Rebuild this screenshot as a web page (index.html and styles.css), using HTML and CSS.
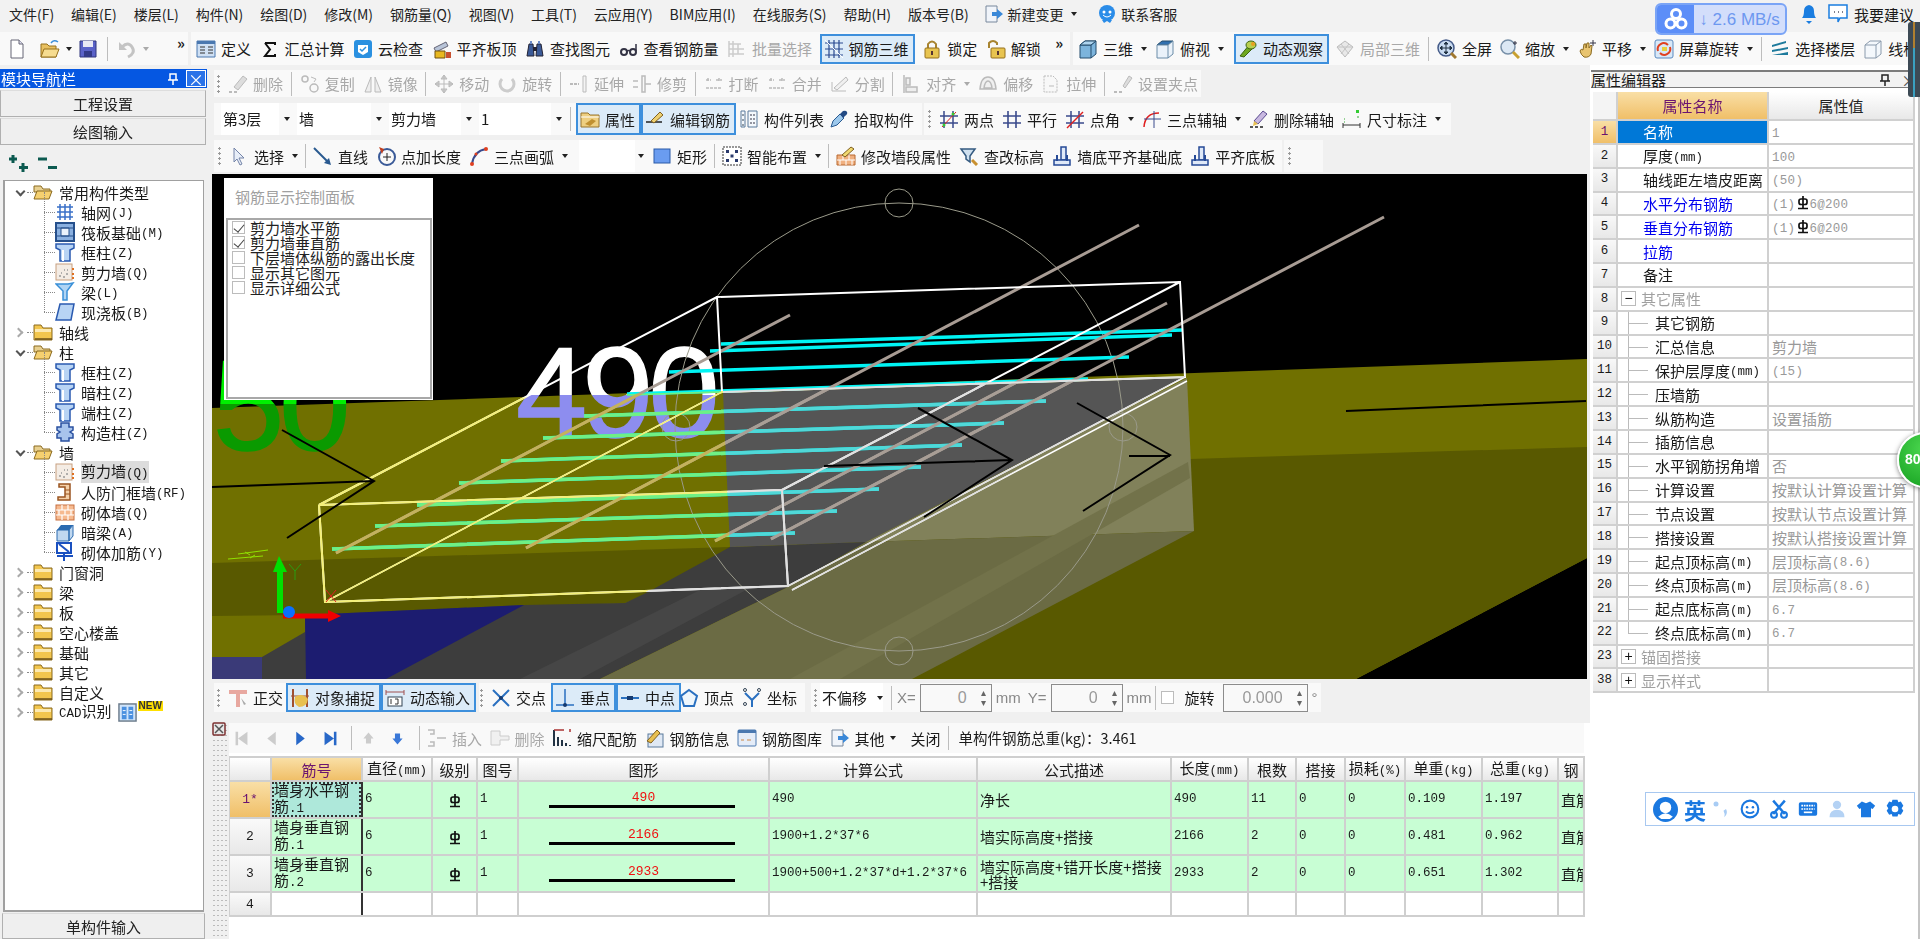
FILE: index.html
```html
<!DOCTYPE html>
<html lang="zh-CN">
<head>
<meta charset="utf-8">
<title>钢筋三维</title>
<link rel="stylesheet" href="styles.css">
</head>
<body>
<svg class="defs" width="0" height="0">
<defs>
<symbol id="doc" viewBox="0 0 20 20"><path d="M4 1h8l4 4v14H4z" fill="#fff" stroke="#667"/><path d="M12 1v4h4" fill="#dde" stroke="#667"/></symbol>
<symbol id="open" viewBox="0 0 20 20"><path d="M1 5h6l2 2h7v11H1z" fill="#e8c060" stroke="#96701c"/><path d="M1 18l3-8h15l-3 8z" fill="#f6dc90" stroke="#96701c"/><path d="M11 4q3-4 7-1" fill="none" stroke="#3c8ed8" stroke-width="1.5"/></symbol>
<symbol id="save" viewBox="0 0 20 20"><path d="M2 2h16v16H2z" fill="#5a62c8" stroke="#30367c"/><path d="M5 2h10v6H5z" fill="#e8e8f4"/><path d="M6 12h8v6H6z" fill="#333a88"/></symbol>
<symbol id="undo" viewBox="0 0 20 20"><path d="M5 8q6-6 10 0t-4 10" fill="none" stroke="#c4c4c4" stroke-width="3"/><path d="M2 3v8h8z" fill="#c4c4c4"/></symbol>
<symbol id="def" viewBox="0 0 20 20"><path d="M1 2h18v16H1z" fill="#cfe0f4" stroke="#4a78b0"/><path d="M1 2h18v3H1z" fill="#4a78b0"/><path d="M4 8h5M4 11h5M4 14h5M12 8h5M12 11h5M12 14h5" stroke="#333"/></symbol>
<symbol id="sigma" viewBox="0 0 20 20"><path d="M5 4h10v2M15 15v2H5l5-6.500L5 4" fill="none" stroke="#111" stroke-width="2"/></symbol>
<symbol id="cloud" viewBox="0 0 20 20"><rect x="1" y="1" width="18" height="18" rx="3" fill="#2a90e0"/><path d="M5 6h10v7l-5 3-5-3z" fill="#fff"/><path d="M7 10l2 2 4-4" fill="none" stroke="#2a90e0" stroke-width="1.500"/></symbol>
<symbol id="align" viewBox="0 0 20 20"><path d="M2 9l12-6 2 4-12 6z" fill="#b8c4d8" stroke="#667"/><path d="M3 12h10v7H3z" fill="#e8b820" stroke="#705010"/><path d="M14 13h5v6h-5z" fill="#c85030"/></symbol>
<symbol id="binoc" viewBox="0 0 20 20"><path d="M2 17l2-12h4l1 12zM11 17l1-12h4l2 12z" fill="#3a5a98" stroke="#223"/><path d="M8 8h4v4H8z" fill="#223"/><path d="M5 2h2v3H5zM13 2h2v3h-2z" fill="#6a8ac8"/></symbol>
<symbol id="glasses" viewBox="0 0 20 20"><circle cx="5" cy="13" r="3" fill="none" stroke="#334" stroke-width="2"/><circle cx="14" cy="13" r="3" fill="none" stroke="#334" stroke-width="2"/><path d="M8 12q2-1 3 0M17 12V5" fill="none" stroke="#334" stroke-width="1.500"/></symbol>
<symbol id="batch" viewBox="0 0 20 20"><path d="M2 2v16M6 2v16M2 5h12M2 10h15M2 15h15M11 5v10" fill="none" stroke="#ccc" stroke-width="1.500"/></symbol>
<symbol id="r3d" viewBox="0 0 20 20"><path d="M1 4h18M1 10h18M1 16h18M5 1v18M10 1v18M15 1v18" fill="none" stroke="#2a4a90" stroke-width="1.200"/><path d="M1 1l18 18" stroke="#fff"/></symbol>
<symbol id="lock" viewBox="0 0 20 20"><path d="M6 9V5q4-5 8 0v4" fill="none" stroke="#a88430" stroke-width="2"/><rect x="3" y="9" width="14" height="10" rx="1" fill="#e8c450" stroke="#96701c"/><path d="M10 12v4" stroke="#533" stroke-width="2"/></symbol>
<symbol id="unlock" viewBox="0 0 20 20"><path d="M3 9V4q4-4 8 0v2" fill="none" stroke="#a88430" stroke-width="2"/><rect x="5" y="9" width="14" height="10" rx="1" fill="#e8c450" stroke="#96701c"/><path d="M12 12v4" stroke="#533" stroke-width="2"/></symbol>
<symbol id="cube" viewBox="0 0 20 20"><path d="M2 6l5-4h11v13l-5 4H2z" fill="#7cb4dc" stroke="#244c6c"/><path d="M2 6h11v13M13 6l5-4" fill="none" stroke="#244c6c"/><path d="M2 6l5-4h11l-5 4z" fill="#aed4ee" stroke="#244c6c"/></symbol>
<symbol id="topv" viewBox="0 0 20 20"><path d="M2 6l5-4h11l-5 4z" fill="#3070b0" stroke="#244c6c"/><path d="M2 6h11v13H2zM13 6l5-4v13l-5 4" fill="#eaf2fa" stroke="#6a8ca8"/></symbol>
<symbol id="orbit" viewBox="0 0 20 20"><path d="M2 17L12 5l4 3-10 10z" fill="#6ea820" stroke="#3c6410"/><ellipse cx="13" cy="6" rx="5" ry="4" fill="#b8d050" stroke="#3c6410"/><circle cx="15" cy="5" r="2" fill="#e8a020"/></symbol>
<symbol id="loc3" viewBox="0 0 20 20"><path d="M2 8l8-6 8 6-8 10z" fill="#e8e8e8" stroke="#bbb"/><path d="M6 5l8 10M14 5L6 15M2 8h16" stroke="#c4c4c4"/></symbol>
<symbol id="zall" viewBox="0 0 20 20"><circle cx="9" cy="9" r="8" fill="#c8daf0" stroke="#445a88" stroke-width="1.500"/><path d="M9 3v12M3 9h12M9 3L7 5h4zM9 15l-2-2h4zM3 9l2-2v4zM15 9l-2-2v4z" stroke="#234" fill="#234"/><path d="M14 14l5 5" stroke="#a07830" stroke-width="3"/></symbol>
<symbol id="zoom" viewBox="0 0 20 20"><circle cx="8" cy="8" r="7" fill="#dce8f4" stroke="#7890a8" stroke-width="1.500"/><path d="M13 13l6 6" stroke="#c8a030" stroke-width="3"/><path d="M15 2v4M13 4h4" stroke="#334"/></symbol>
<symbol id="pan" viewBox="0 0 20 20"><path d="M3 12q1-3 3-1l1-6h2v4l1-5h2v5l2-3 1 1-1 8q-2 4-7 3-3-2-4-6z" fill="#e8c470" stroke="#8a6a20"/><path d="M16 1v6M13 4h6" stroke="#334"/></symbol>
<symbol id="scrot" viewBox="0 0 20 20"><rect x="1" y="1" width="18" height="18" rx="2" fill="#d8e8f8" stroke="#5a8ac0"/><path d="M4 12a6 6 0 0 1 10-6M16 8a6 6 0 0 1-10 6" fill="none" stroke="#e04020" stroke-width="2"/><path d="M8 8h5v4H8z" fill="#e8d040"/></symbol>
<symbol id="floors" viewBox="0 0 20 20"><path d="M2 6l14-4v2L2 8zM2 11l16-3v2L2 13zM2 16l16-3v3H2z" fill="#1d7a9c"/></symbol>
<symbol id="wire" viewBox="0 0 20 20"><path d="M2 6l5-4h11v13l-5 4H2zM2 6h11v13M13 6l5-4" fill="#f4f8fc" stroke="#8a9aac"/></symbol>
<symbol id="del" viewBox="0 0 20 20"><path d="M6 13L15 2l4 3-9 11z" fill="#ddd" stroke="#bbb"/><path d="M1 18h3M6 18h3" stroke="#bbb" stroke-width="2"/></symbol>
<symbol id="copy" viewBox="0 0 20 20"><circle cx="5" cy="5" r="3" fill="none" stroke="#bbb" stroke-width="1.500"/><circle cx="14" cy="14" r="4" fill="none" stroke="#bbb" stroke-width="1.500"/><path d="M11 3l5 2-2 3" fill="none" stroke="#bbb"/></symbol>
<symbol id="mirror" viewBox="0 0 20 20"><path d="M8 3v15H2zM12 3v15h6z" fill="#eee" stroke="#bbb"/></symbol>
<symbol id="move" viewBox="0 0 20 20"><path d="M10 1v18M1 10h18M10 1L7 5h6zM10 19l-3-4h6zM1 10l4-3v6zM19 10l-4-3v6z" stroke="#bbb" fill="#ccc"/></symbol>
<symbol id="rot" viewBox="0 0 20 20"><path d="M5 5a7 7 0 1 0 10 0" fill="none" stroke="#ccc" stroke-width="3"/></symbol>
<symbol id="ext" viewBox="0 0 20 20"><path d="M1 10h9" stroke="#bbb" stroke-dasharray="3 1" stroke-width="2"/><path d="M14 2h3v16h-3z" fill="#f4f4f4" stroke="#bbb"/></symbol>
<symbol id="trim" viewBox="0 0 20 20"><path d="M1 7h5M1 13h5M10 2h3v16h-3zM13 10h6" fill="none" stroke="#bbb" stroke-width="1.500"/></symbol>
<symbol id="brk" viewBox="0 0 20 20"><path d="M2 6h5M12 6h6M2 14h16M4 4v4M15 4v4" stroke="#bbb" stroke-width="1.500" stroke-dasharray="3 1"/></symbol>
<symbol id="split" viewBox="0 0 20 20"><path d="M2 17h14M2 17V8M4 14L16 3l2 3-11 10z" fill="#f0f0f0" stroke="#bbb"/></symbol>
<symbol id="alr" viewBox="0 0 20 20"><path d="M3 1v18M5 4h4v7H5zM5 13h11v5H5z" fill="#eee" stroke="#bbb" stroke-width="1.500"/></symbol>
<symbol id="off" viewBox="0 0 20 20"><path d="M2 15q1-12 8-12t8 12zM6 14q1-7 4-7t4 7z" fill="#f0f0f0" stroke="#bbb" stroke-width="1.500"/></symbol>
<symbol id="stretch" viewBox="0 0 20 20"><path d="M3 2h9l4 4v12H3z" fill="#f8f8f8" stroke="#bbb" stroke-dasharray="2 1"/><path d="M8 12h5" stroke="#bbb"/></symbol>
<symbol id="grip" viewBox="0 0 20 20"><path d="M10 12l6-10 3 2-7 10z" fill="#ddd" stroke="#bbb"/><path d="M1 18h3M6 18h3" stroke="#bbb" stroke-width="2"/></symbol>
<symbol id="attr" viewBox="0 0 20 20"><path d="M1 4h7l2 2h9v12H1z" fill="#eecf80" stroke="#98742c"/><path d="M5 15l7-5 4 2-6 5z" fill="#c09030"/><path d="M1 8h18" stroke="#fff"/></symbol>
<symbol id="edbar" viewBox="0 0 20 20"><path d="M1 13h16" stroke="#222" stroke-width="1.500"/><path d="M6 12L15 3l3 3-9 8z" fill="#eed070" stroke="#806020"/></symbol>
<symbol id="list" viewBox="0 0 20 20"><path d="M2 2h4v16H2zM9 2h9v16H9z" fill="#f4f8fc" stroke="#5a7a9c"/><path d="M11 6h5M11 10h5M11 14h5" stroke="#334" stroke-dasharray="2 1"/><path d="M4 5v2M4 10v2M4 15v2" stroke="#345"/></symbol>
<symbol id="pick" viewBox="0 0 20 20"><path d="M2 18l2-6 7-7 4 4-7 7z" fill="#9cc8ec" stroke="#2a5a90"/><path d="M11 5l3-3q3-1 4 1t-2 4l-2 2z" fill="#224a84"/></symbol>
<symbol id="twop" viewBox="0 0 20 20"><path d="M5 2v17M14 2v17M1 7h18M1 14h18" stroke="#3a4a8c" stroke-width="1.500"/><path d="M3 18L17 3" stroke="#e02020"/><circle cx="14" cy="5" r="1.500" fill="#3c3"/><circle cx="5" cy="16" r="1.500" fill="#3c3"/></symbol>
<symbol id="par" viewBox="0 0 20 20"><path d="M6 2v17M14 2v17M1 7h18M1 14h18" stroke="#3a4a8c" stroke-width="1.600"/></symbol>
<symbol id="ang" viewBox="0 0 20 20"><path d="M6 2v17M14 2v17M1 7h18M1 14h18" stroke="#3a4a8c" stroke-width="1.500"/><path d="M2 19L18 3" stroke="#e02020" stroke-width="1.500"/></symbol>
<symbol id="arc3" viewBox="0 0 20 20"><path d="M2 18q1-14 15-14" fill="none" stroke="#e02020" stroke-width="1.500"/><path d="M12 2v17M2 10h17" stroke="#3a4a8c"/></symbol>
<symbol id="delax" viewBox="0 0 20 20"><path d="M5 12l9-10 4 3-9 10z" fill="#c8b8e0" stroke="#5a4a90"/><path d="M5 12l4 3-5 2z" fill="#e8c050"/><path d="M1 18h3M6 18h3M11 18h3" stroke="#555" stroke-width="2"/></symbol>
<symbol id="dim" viewBox="0 0 20 20"><rect x="14" y="1" width="3" height="3" fill="#3c3"/><path d="M2 10h1M2 13h1M16 7v2" stroke="#3a3"/><path d="M1 14v5M18 14v5M1 16h17" stroke="#333"/></symbol>
<symbol id="cursor" viewBox="0 0 20 20"><path d="M5 2v14l3-3 3 6 2-1-3-6h5z" fill="#e8eef8" stroke="#7484a8"/></symbol>
<symbol id="line" viewBox="0 0 20 20"><path d="M1 2l15 15" stroke="#2a5a90" stroke-width="2"/><path d="M18 19l-7-2 5-5z" fill="#2a5a90"/></symbol>
<symbol id="ptlen" viewBox="0 0 20 20"><circle cx="11" cy="11" r="8" fill="none" stroke="#3a5a98" stroke-width="2"/><path d="M11 7v8M7 11h8" stroke="#222"/><path d="M3 1l5 2-2 5z" fill="#c04020"/></symbol>
<symbol id="arc" viewBox="0 0 20 20"><path d="M3 18Q5 5 17 3" fill="none" stroke="#3a4a8c" stroke-width="2"/><circle cx="3" cy="18" r="2" fill="#e04020"/><circle cx="7" cy="8" r="1.500" fill="#e04020"/><circle cx="17" cy="3" r="2" fill="#e04020"/></symbol>
<symbol id="rect" viewBox="0 0 20 20"><rect x="2" y="3" width="16" height="14" fill="#6a9cf0" stroke="#2a5aa8"/></symbol>
<symbol id="smart" viewBox="0 0 20 20"><rect x="1" y="1" width="18" height="18" fill="#fff" stroke="#333" stroke-dasharray="2 1"/><path d="M4 4h3v3H4zM13 4h3v3h-3zM8.500 8.500h3v3h-3zM4 13h3v3H4zM13 13h3v3h-3z" fill="#2a3a6c"/></symbol>
<symbol id="wprop" viewBox="0 0 20 20"><path d="M1 9h18v10H1z" fill="#f0b080" stroke="#b86830"/><path d="M1 14h18M7 9v5M13 9v5M4 14v5M10 14v5M16 14v5" stroke="#fff"/><path d="M6 9l9-8 3 2-9 8z" fill="#f0d870" stroke="#806020"/></symbol>
<symbol id="elev" viewBox="0 0 20 20"><path d="M2 3h14l-5 7v6l-4-3v-3z" fill="#cfe0ef" stroke="#345a80" stroke-width="1.500"/><path d="M13 14l5 5" stroke="#c89030" stroke-width="3"/></symbol>
<symbol id="base" viewBox="0 0 20 20"><path d="M9 1h5v13H9z" fill="#dfe9f8" stroke="#264a96" stroke-width="1.500"/><path d="M2 14h16v5H2z" fill="#dfe9f8" stroke="#264a96" stroke-width="1.500"/><path d="M5 9v6M15 9v6" stroke="#264a96" stroke-width="2"/></symbol>
<symbol id="ortho" viewBox="0 0 20 20"><path d="M1 2h18v4H12v13H8V6H1z" fill="#e8a8a0"/><path d="M13 10l5 6-2 1z" fill="#aaa"/></symbol>
<symbol id="snap" viewBox="0 0 20 20"><path d="M3 1v18M17 1v18" stroke="#a05030" stroke-width="2"/><path d="M1 8h18" stroke="#a05030"/><path d="M5 9q7-5 13 2-1 8-9 8-6-3-4-10z" fill="#e8c050"/></symbol>
<symbol id="dyn" viewBox="0 0 20 20"><path d="M1 2v5M19 2v5M1 4h18" stroke="#a05050"/><rect x="3" y="9" width="14" height="9" fill="#fff" stroke="#345"/><path d="M6 11v5M10 11h3v5h-3" fill="none" stroke="#333"/></symbol>
<symbol id="cross" viewBox="0 0 20 20"><path d="M2 2l16 16M18 2L2 18" stroke="#2a70c0" stroke-width="2"/><circle cx="10" cy="10" r="2" fill="#163a70"/></symbol>
<symbol id="perp" viewBox="0 0 20 20"><path d="M10 1v17M1 17h18" stroke="#2a70c0" stroke-width="1.500"/><circle cx="10" cy="17" r="2" fill="#163a70"/></symbol>
<symbol id="midp" viewBox="0 0 20 20"><path d="M1 10h18" stroke="#2a70c0" stroke-width="2"/><rect x="7" y="8" width="6" height="4" fill="#163a70"/></symbol>
<symbol id="vert" viewBox="0 0 20 20"><path d="M10 2l8 6-3 10H5L2 8z" fill="#eef6fc" stroke="#2a70c0" stroke-width="2"/></symbol>
<symbol id="coord" viewBox="0 0 20 20"><path d="M3 5l7 7 7-7M10 12v7" fill="none" stroke="#2a70c0" stroke-width="2"/><circle cx="3" cy="2" r="1.500" fill="none" stroke="#345"/><circle cx="17" cy="2" r="1.500" fill="none" stroke="#345"/><circle cx="3" cy="16" r="1.500" fill="none" stroke="#345"/></symbol>
<symbol id="first" viewBox="0 0 20 20"><path d="M3 2h3v16H3zM17 2v16L6 10z" fill="#ccc"/></symbol>
<symbol id="prev" viewBox="0 0 20 20"><path d="M15 2v16L5 10z" fill="#ccc"/></symbol>
<symbol id="next" viewBox="0 0 20 20"><path d="M5 2v16l10-8z" fill="#2868c8"/></symbol>
<symbol id="last" viewBox="0 0 20 20"><path d="M14 2h3v16h-3zM3 2v16l11-8z" fill="#2868c8"/></symbol>
<symbol id="up" viewBox="0 0 20 20"><path d="M10 3l6 7h-3v6H7v-6H4z" fill="#ccc"/></symbol>
<symbol id="down" viewBox="0 0 20 20"><path d="M10 17l6-7h-3V4H7v6H4z" fill="#3a78d8"/></symbol>
<symbol id="ins" viewBox="0 0 20 20"><path d="M1 2h6v4H3M1 18h6v-4H3M10 10h9" fill="none" stroke="#bbb" stroke-width="1.500"/></symbol>
<symbol id="delr" viewBox="0 0 20 20"><path d="M1 3h9v5h9v4h-9v5H1z" fill="#f0f0f0" stroke="#ccc"/></symbol>
<symbol id="scale" viewBox="0 0 20 20"><path d="M2 18V2M6 18V9M10 18v-6M14 18v-3M18 18v-1" stroke="#234" stroke-width="2"/><path d="M2 2h10M18 1v3" stroke="#a33" stroke-width="1.500"/></symbol>
<symbol id="info" viewBox="0 0 20 20"><rect x="3" y="6" width="15" height="13" fill="#dfe8f4" stroke="#5a7a9c"/><path d="M2 13L12 2l3 3-9 10z" fill="#e8c050" stroke="#806020"/></symbol>
<symbol id="lib" viewBox="0 0 20 20"><rect x="1" y="2" width="18" height="16" rx="1" fill="#e4ecf8" stroke="#4a78b0"/><path d="M1 2h18v3H1z" fill="#4a78b0"/><path d="M4 12h3M10 12h4" stroke="#c84"/></symbol>
<symbol id="other" viewBox="0 0 20 20"><path d="M2 2h11v16H2z" fill="#f0f4fa" stroke="#78889c"/><path d="M8 8h5V5l6 5-6 5v-3H8z" fill="#3a88d8"/></symbol>
<symbol id="fold" viewBox="0 0 20 20"><path d="M1 3h7l2 3h9v12H1z" fill="#f2c64e" stroke="#8a6a20"/><path d="M2 7h16v3H2z" fill="#fbe9b2"/><path d="M2 17h17" stroke="#6a5018" stroke-width="1.500"/></symbol>
<symbol id="foldo" viewBox="0 0 20 20"><path d="M1 4h7l2 3h7v3H1z" fill="#e8d090" stroke="#8a6a20"/><path d="M1 17l3-8h15l-3 8z" fill="#f5d070" stroke="#8a6a20"/></symbol>
<symbol id="grid" viewBox="0 0 20 20"><path d="M2 5h16M2 10h16M2 15h16M5 2v16M10 2v16M15 2v16" stroke="#3a70c8" stroke-width="1.500"/></symbol>
<symbol id="raft" viewBox="0 0 20 20"><rect x="1" y="1" width="18" height="18" fill="#8ab0e0" stroke="#26508c" stroke-width="2"/><path d="M6 6h8v8H6z" fill="#eaf2fc" stroke="#26508c"/><path d="M1 6h18M1 14h18" stroke="#26508c"/></symbol>
<symbol id="col" viewBox="0 0 20 20"><path d="M1 2h18v4l-4 2v11H5V8L1 6z" fill="#b8d4f4" stroke="#2a5ab0" stroke-width="1.500"/><path d="M8 8v11" stroke="#fff" stroke-width="2"/></symbol>
<symbol id="wall" viewBox="0 0 20 20"><rect x="1" y="2" width="16" height="16" fill="#f4ece4" stroke="#c8a080"/><path d="M4 14h2M8 15h2M11 12h2M6 11h1M12 8h1M9 8h1" stroke="#999" stroke-width="1.500"/><path d="M18 6v2M18 11v2M18 15v2" stroke="#e07020" stroke-width="2"/></symbol>
<symbol id="beam" viewBox="0 0 20 20"><path d="M1 2h12l5-1-6 8v9H8V9z" fill="#b0d4f4" stroke="#3a90d8" stroke-width="1.500"/></symbol>
<symbol id="slab" viewBox="0 0 20 20"><path d="M5 2h14l-3 16H1z" fill="#b8d4f4" stroke="#2a5ab0" stroke-width="1.500"/></symbol>
<symbol id="gzz" viewBox="0 0 20 20"><path d="M6 1h8v4h4v3l-3 2 3 2v4h-4v3H6v-3H2v-4l3-2-3-2V5h4z" fill="#a8c4ec" stroke="#2a50a0" stroke-width="1.500"/></symbol>
<symbol id="rf" viewBox="0 0 20 20"><path d="M4 2h11v16H3v-3h7V5H4z" fill="#f4d0a8" stroke="#9a5420" stroke-width="1.500"/><path d="M10 8h5M10 12h5" stroke="#9a5420"/></symbol>
<symbol id="brick" viewBox="0 0 20 20"><rect x="1" y="3" width="18" height="15" fill="#f6ba90" stroke="#c87040"/><path d="M1 8h18M1 13h18M7 3v5M13 3v5M4 8v5M10 8v5M16 8v5M7 13v5M13 13v5" stroke="#fff" stroke-width="1.200"/></symbol>
<symbol id="lint" viewBox="0 0 20 20"><path d="M2 8l4-5h12l-4 5z" fill="#2a6ab0"/><path d="M2 8h12v11H2zM14 8l4-5v11l-4 5z" fill="#c0d8f0" stroke="#2a6ab0"/></symbol>
<symbol id="mas" viewBox="0 0 20 20"><rect x="2" y="1" width="14" height="10" fill="#fff" stroke="#1a50c0" stroke-width="2"/><path d="M4 2l10 8M2 14h16M9 11v8" stroke="#1a50c0" stroke-width="2"/></symbol>
<symbol id="cad" viewBox="0 0 20 20"><rect x="1" y="1" width="18" height="18" fill="#d0e4fa" stroke="#6a7a8a" stroke-width="1.500"/><path d="M4 4h5v13H4zM11 4h5v13h-5z" fill="#4a90e0"/><path d="M5 8h3M5 12h3M12 8h3M12 12h3" stroke="#fff"/></symbol>
<symbol id="grade" viewBox="0 0 12 14"><path d="M6 0v12M1 12.500h10" stroke="#111" stroke-width="1.700"/><rect x="2" y="3" width="8" height="5.500" rx="2" fill="none" stroke="#111" stroke-width="1.700"/></symbol>
<symbol id="pin" viewBox="0 0 12 12"><path d="M3 1h6v6H3zM1 7h10M6 7v5" fill="none" stroke="currentColor" stroke-width="1.500"/></symbol>
</defs>
</svg>

<div class="app">
  <header class="menubar">
    <span>文件(F)</span><span>编辑(E)</span><span>楼层(L)</span><span>构件(N)</span><span>绘图(D)</span><span>修改(M)</span><span>钢筋量(Q)</span><span>视图(V)</span><span>工具(T)</span><span>云应用(Y)</span><span>BIM应用(I)</span><span>在线服务(S)</span><span>帮助(H)</span><span>版本号(B)</span>
    <span class="it"><svg class="ic"><use href="#other"/></svg>新建变更</span><i class="car"></i>
    <span class="it"><svg class="ic" viewBox="0 0 20 20"><circle cx="10" cy="9" r="8" fill="#2a8ce8"/><path d="M5 16l2 3 3-2 3 2 2-3z" fill="#2a8ce8"/><circle cx="7" cy="8" r="1.500" fill="#fff"/><circle cx="13" cy="8" r="1.500" fill="#fff"/><path d="M6 11q4 4 8 0" fill="none" stroke="#fff"/></svg>联系客服</span>
  </header>

  <div class="tools-top">
    <div class="tb tb-file">
      <svg class="ic"><use href="#doc"/></svg><svg class="ic gap-s"><use href="#open"/></svg><i class="car"></i><svg class="ic"><use href="#save"/></svg><b class="sep"></b><svg class="ic"><use href="#undo"/></svg><i class="car dis"></i><span class="more">»</span>
    </div>
    <div class="tb tb-main">
      <span class="it"><svg class="ic"><use href="#def"/></svg>定义</span>
      <span class="it"><svg class="ic"><use href="#sigma"/></svg>汇总计算</span>
      <span class="it"><svg class="ic"><use href="#cloud"/></svg>云检查</span>
      <span class="it"><svg class="ic"><use href="#align"/></svg>平齐板顶</span>
      <span class="it"><svg class="ic"><use href="#binoc"/></svg>查找图元</span>
      <span class="it"><svg class="ic"><use href="#glasses"/></svg>查看钢筋量</span>
      <span class="it dis"><svg class="ic"><use href="#batch"/></svg>批量选择</span>
      <span class="it on"><svg class="ic"><use href="#r3d"/></svg>钢筋三维</span>
      <span class="it"><svg class="ic"><use href="#lock"/></svg>锁定</span>
      <span class="it"><svg class="ic"><use href="#unlock"/></svg>解锁</span>
      <span class="more">»</span>
    </div>
    <div class="tb tb-view">
      <span class="it"><svg class="ic"><use href="#cube"/></svg>三维</span><i class="car"></i>
      <span class="it"><svg class="ic"><use href="#topv"/></svg>俯视</span><i class="car"></i>
      <span class="it on"><svg class="ic"><use href="#orbit"/></svg>动态观察</span>
      <span class="it dis"><svg class="ic"><use href="#loc3"/></svg>局部三维</span><b class="sep"></b>
      <span class="it"><svg class="ic"><use href="#zall"/></svg>全屏</span>
      <span class="it"><svg class="ic"><use href="#zoom"/></svg>缩放</span><i class="car"></i>
      <span class="it"><svg class="ic"><use href="#pan"/></svg>平移</span><i class="car"></i>
      <span class="it"><svg class="ic"><use href="#scrot"/></svg>屏幕旋转</span><i class="car"></i><b class="sep"></b>
      <span class="it"><svg class="ic"><use href="#floors"/></svg>选择楼层</span>
      <span class="it"><svg class="ic"><use href="#wire"/></svg>线框</span>
    </div>
  </div>

  <div class="main">
    <aside class="nav">
      <div class="nav-title"><span>模块导航栏</span><svg class="pin"><use href="#pin"/></svg><span class="nav-x">×</span></div>
      <button class="nav-btn">工程设置</button>
      <button class="nav-btn">绘图输入</button>
      <div class="nav-pm">
        <svg class="pm-ic" viewBox="0 0 24 20"><path d="M5 1v8M1 5h8M15 9v9M11 13.500h9" stroke="#0c5a50" stroke-width="3"/></svg>
        <svg class="pm-ic" viewBox="0 0 24 20"><path d="M1 5h9M11 13.500h9" stroke="#0c5a50" stroke-width="3"/></svg>
      </div>
      <div class="tree">
        <div class="tr open"><i class="tw"></i><svg class="fo"><use href="#foldo"/></svg>常用构件类型</div>
        <div class="tr ch"><svg class="fo"><use href="#grid"/></svg>轴网<span class="lat">(J)</span></div>
        <div class="tr ch"><svg class="fo"><use href="#raft"/></svg>筏板基础<span class="lat">(M)</span></div>
        <div class="tr ch"><svg class="fo"><use href="#col"/></svg>框柱<span class="lat">(Z)</span></div>
        <div class="tr ch"><svg class="fo"><use href="#wall"/></svg>剪力墙<span class="lat">(Q)</span></div>
        <div class="tr ch"><svg class="fo"><use href="#beam"/></svg>梁<span class="lat">(L)</span></div>
        <div class="tr ch end"><svg class="fo"><use href="#slab"/></svg>现浇板<span class="lat">(B)</span></div>
        <div class="tr"><i class="tw cl"></i><svg class="fo"><use href="#fold"/></svg>轴线</div>
        <div class="tr open"><i class="tw"></i><svg class="fo"><use href="#foldo"/></svg>柱</div>
        <div class="tr ch"><svg class="fo"><use href="#col"/></svg>框柱<span class="lat">(Z)</span></div>
        <div class="tr ch"><svg class="fo"><use href="#col"/></svg>暗柱<span class="lat">(Z)</span></div>
        <div class="tr ch"><svg class="fo"><use href="#col"/></svg>端柱<span class="lat">(Z)</span></div>
        <div class="tr ch end"><svg class="fo"><use href="#gzz"/></svg>构造柱<span class="lat">(Z)</span></div>
        <div class="tr open"><i class="tw"></i><svg class="fo"><use href="#foldo"/></svg>墙</div>
        <div class="tr ch"><svg class="fo"><use href="#wall"/></svg><span class="sel">剪力墙<span class="lat">(Q)</span></span></div>
        <div class="tr ch"><svg class="fo"><use href="#rf"/></svg>人防门框墙<span class="lat">(RF)</span></div>
        <div class="tr ch"><svg class="fo"><use href="#brick"/></svg>砌体墙<span class="lat">(Q)</span></div>
        <div class="tr ch"><svg class="fo"><use href="#lint"/></svg>暗梁<span class="lat">(A)</span></div>
        <div class="tr ch end"><svg class="fo"><use href="#mas"/></svg>砌体加筋<span class="lat">(Y)</span></div>
        <div class="tr"><i class="tw cl"></i><svg class="fo"><use href="#fold"/></svg>门窗洞</div>
        <div class="tr"><i class="tw cl"></i><svg class="fo"><use href="#fold"/></svg>梁</div>
        <div class="tr"><i class="tw cl"></i><svg class="fo"><use href="#fold"/></svg>板</div>
        <div class="tr"><i class="tw cl"></i><svg class="fo"><use href="#fold"/></svg>空心楼盖</div>
        <div class="tr"><i class="tw cl"></i><svg class="fo"><use href="#fold"/></svg>基础</div>
        <div class="tr"><i class="tw cl"></i><svg class="fo"><use href="#fold"/></svg>其它</div>
        <div class="tr"><i class="tw cl"></i><svg class="fo"><use href="#fold"/></svg>自定义</div>
        <div class="tr"><i class="tw cl"></i><svg class="fo"><use href="#fold"/></svg><span class="lbl"><span class="lat">CAD</span>识别</span><svg class="fo cad"><use href="#cad"/></svg><span class="new">NEW</span></div>
      </div>
      <button class="nav-btn last">单构件输入</button>
    </aside>

    <section class="center">
      <div class="tb tb-edit dis-row">
        <i class="hd"></i>
        <span class="it"><svg class="ic"><use href="#del"/></svg>删除</span><b class="sep"></b>
        <span class="it"><svg class="ic"><use href="#copy"/></svg>复制</span>
        <span class="it"><svg class="ic"><use href="#mirror"/></svg>镜像</span><b class="sep"></b>
        <span class="it"><svg class="ic"><use href="#move"/></svg>移动</span>
        <span class="it"><svg class="ic"><use href="#rot"/></svg>旋转</span><b class="sep"></b>
        <span class="it"><svg class="ic"><use href="#ext"/></svg>延伸</span>
        <span class="it"><svg class="ic"><use href="#trim"/></svg>修剪</span><b class="sep"></b>
        <span class="it"><svg class="ic"><use href="#brk"/></svg>打断</span>
        <span class="it"><svg class="ic"><use href="#brk"/></svg>合并</span>
        <span class="it"><svg class="ic"><use href="#split"/></svg>分割</span><b class="sep"></b>
        <span class="it"><svg class="ic"><use href="#alr"/></svg>对齐</span><i class="car dis"></i>
        <span class="it"><svg class="ic"><use href="#off"/></svg>偏移</span>
        <span class="it"><svg class="ic"><use href="#stretch"/></svg>拉伸</span><b class="sep"></b>
        <span class="it"><svg class="ic"><use href="#grip"/></svg>设置夹点</span>
      </div>

      <div class="tb-row r3">
        <div class="tb tb-comp">
          <span class="cb c1">第3层</span><i class="car"></i>
          <span class="cb c2">墙</span><i class="car"></i>
          <span class="cb c3">剪力墙</span><i class="car"></i>
          <span class="cb c4">1</span><i class="car"></i><b class="sep"></b>
          <div class="pair">
            <span class="it on"><svg class="ic"><use href="#attr"/></svg>属性</span>
            <span class="it on"><svg class="ic"><use href="#edbar"/></svg>编辑钢筋</span>
          </div>
          <span class="it"><svg class="ic"><use href="#list"/></svg>构件列表</span>
          <span class="it"><svg class="ic"><use href="#pick"/></svg>拾取构件</span>
        </div>
        <div class="tb tb-axis">
          <i class="hd"></i>
          <span class="it"><svg class="ic"><use href="#twop"/></svg>两点</span>
          <span class="it"><svg class="ic"><use href="#par"/></svg>平行</span>
          <span class="it"><svg class="ic"><use href="#ang"/></svg>点角</span><i class="car"></i>
          <span class="it"><svg class="ic"><use href="#arc3"/></svg>三点辅轴</span><i class="car"></i>
          <span class="it"><svg class="ic"><use href="#delax"/></svg>删除辅轴</span>
          <span class="it"><svg class="ic"><use href="#dim"/></svg>尺寸标注</span><i class="car"></i>
        </div>
      </div>

      <div class="tb-row r4">
        <div class="tb tb-draw">
          <i class="hd"></i>
          <span class="it"><svg class="ic"><use href="#cursor"/></svg>选择</span><i class="car"></i><b class="sep"></b>
          <span class="it"><svg class="ic"><use href="#line"/></svg>直线</span>
          <span class="it"><svg class="ic"><use href="#ptlen"/></svg>点加长度</span>
          <span class="it"><svg class="ic"><use href="#arc"/></svg>三点画弧</span><i class="car"></i>
          <span class="cb c5"></span><i class="car"></i>
          <span class="it"><svg class="ic"><use href="#rect"/></svg>矩形</span><b class="sep"></b>
          <span class="it"><svg class="ic"><use href="#smart"/></svg>智能布置</span><i class="car"></i><b class="sep"></b>
          <span class="it"><svg class="ic"><use href="#wprop"/></svg>修改墙段属性</span>
          <span class="it"><svg class="ic"><use href="#elev"/></svg>查改标高</span>
          <span class="it"><svg class="ic"><use href="#base"/></svg>墙底平齐基础底</span>
          <span class="it"><svg class="ic"><use href="#base"/></svg>平齐底板</span>
        </div>
        <div class="tb tb-stub"><i class="hd"></i></div>
      </div>

      <div class="stage">
        <svg class="scene" viewBox="212 174 1375 505" width="1375" height="505">
          <defs>
            <linearGradient id="t490" gradientUnits="userSpaceOnUse" x1="0" y1="392" x2="0" y2="398"><stop offset="0" stop-color="#fff"/><stop offset="0.500" stop-color="#fff"/><stop offset="0.500" stop-color="#8d8def"/></linearGradient>
            <linearGradient id="t50" gradientUnits="userSpaceOnUse" x1="0" y1="400" x2="0" y2="408"><stop offset="0.500" stop-color="#00f000"/><stop offset="0.500" stop-color="#0a9a00"/></linearGradient>
            <clipPath id="zOlive"><polygon points="212,408 723,391 730,547 625,603 212,620"/></clipPath>
            <clipPath id="zGrey"><polygon points="723,391 1186,376 1000,480 788,600 625,603 730,547"/></clipPath>
            <g id="bars">
              <path d="M332 549L795 533M375 526L837 511M417 505L879 489M459 483L921 467M501 461L962 445M543 438L1004 423M584 416L1046 401M627 394L1088 379M669 372L1129 357M710 351L1172 335M721 344L1183 330"/>
            </g>
            <g id="rods">
              <path d="M336 553L790 315M526 548L1139 225M715 541L1167 303M771 539L1384 217"/>
            </g>
            <g id="box">
              <path d="M717 297L1180 282L1185 377L722 392ZM717 297L319 505L782 490L1180 282M319 505L325 602L788 586L782 490"/>
              <path class="thin" d="M722 392L325 602M1185 377L788 586M1187 381L792 590"/>
            </g>
          </defs>
          <rect x="212" y="174" width="1375" height="505" fill="#000"/>
          <polygon fill="#707000" points="212,408 1587,359 1587,558 1356,679 212,679"/>
          <polygon fill="#595900" points="1190,459 1587,447 1587,558 1356,679 700,679 800,540"/>
          <polygon fill="#595900" points="212,563 730,547 730,560 625,603 305,615 212,616"/>
          <polygon fill="#3a3a78" points="212,657 262,657 262,679 212,679"/>
          <polygon fill="#3d3d3d" points="262,657 305,632 305,615 524,605 625,603 648,592 730,547 866,542 788,587 600,679 262,679"/>
          <polygon fill="#1c1c70" points="305,615 524,605 386,679 306,679"/>
          <polygon fill="#464646" points="520,679 700,590 750,588 580,679"/>
          <polygon fill="#555555" points="723,393 1185,378 866,542 730,547"/>
          <polygon fill="#81815a" points="1187,378 1194,531 866,542"/>
          <polygon fill="#6b6b44" points="866,542 1194,531 912,679 600,679 788,587"/>
          <polygon fill="#72724a" points="1188,462 1190,478 840,679 790,679"/>

          <text class="big g50" x="213" y="450">50</text>
          <text class="big w490" x="516" y="437">490</text>

          <g class="halo">
            <circle cx="899" cy="427" r="224"/>
            <ellipse cx="899" cy="203" rx="14" ry="14"/>
            <ellipse cx="899" cy="651" rx="14" ry="14"/>
            <ellipse cx="1123" cy="427" rx="14" ry="14"/>
            <ellipse cx="676" cy="427" rx="14" ry="14"/>
          </g>

          <use href="#bars" class="bars-k"/>
          <use href="#rods" class="rods-k"/>
          <use href="#box" class="box-k"/>
          <g clip-path="url(#zOlive)">
            <use href="#bars" class="bars-o"/>
            <use href="#rods" class="rods-o"/>
            <use href="#box" class="box-o"/>
          </g>
          <g clip-path="url(#zGrey)">
            <use href="#bars" class="bars-g"/>
            <use href="#rods" class="rods-g"/>
            <use href="#box" class="box-g"/>
          </g>

          <path class="ar" d="M282 430L374 481L287 538M212 487L374 481M918 408L1012 460L924 517M824 466L1012 460M1077 403L1170 455L1083 511M1129 456H1170M1346 411L1586 401"/>

          <path class="az" d="M280 613V570"/>
          <polygon fill="#00e000" points="279,556 273,572 287,572"/>
          <path class="ax" d="M283 616H330"/>
          <polygon fill="#f00000" points="341,616 328,610 328,622"/>
          <circle cx="289" cy="612" r="6" fill="#0a70ff"/>
          <path class="yl" d="M289 564l6 7 6-7M295 571v9"/>
          <path class="xl" d="M326 590l10 12M336 590l-10 12"/>
          <path class="sc" d="M238 554l30-4M228 559l35-3M245 552l5 3M250 558l5-3"/>
        </svg>
        <div class="rebar-panel">
          <div class="rp-title">钢筋显示控制面板</div>
          <div class="rp-list">
            <label class="rp-it"><i class="chk on"></i>剪力墙水平筋</label>
            <label class="rp-it"><i class="chk on"></i>剪力墙垂直筋</label>
            <label class="rp-it"><i class="chk"></i>下层墙体纵筋的露出长度</label>
            <label class="rp-it"><i class="chk"></i>显示其它图元</label>
            <label class="rp-it"><i class="chk"></i>显示详细公式</label>
          </div>
        </div>
      </div>

      <div class="tb-row r5">
        <div class="tb tb-snap1">
          <i class="hd"></i>
          <span class="it"><svg class="ic"><use href="#ortho"/></svg>正交</span>
          <div class="pair">
            <span class="it on"><svg class="ic"><use href="#snap"/></svg>对象捕捉</span>
            <span class="it on"><svg class="ic"><use href="#dyn"/></svg>动态输入</span>
          </div>
        </div>
        <div class="tb tb-snap2">
          <i class="hd"></i>
          <span class="it"><svg class="ic"><use href="#cross"/></svg>交点</span>
          <div class="pair">
            <span class="it on"><svg class="ic"><use href="#perp"/></svg>垂点</span>
            <span class="it on"><svg class="ic"><use href="#midp"/></svg>中点</span>
          </div>
          <span class="it"><svg class="ic"><use href="#vert"/></svg>顶点</span>
          <span class="it"><svg class="ic"><use href="#coord"/></svg>坐标</span>
        </div>
        <div class="tb tb-snap3">
          <i class="hd"></i>
          <span class="cb c6">不偏移</span><i class="car"></i><b class="sep"></b>
          <span class="lab">X=</span><span class="spin">0</span><span class="lab">mm</span><span class="lab ly">Y=</span><span class="spin">0</span><span class="lab">mm</span><b class="sep"></b>
          <i class="chk"></i><span class="rt">旋转</span><span class="spin wide">0.000</span><span class="lab">°</span>
        </div>
      </div>

      <div class="bottom">
        <div class="grip-col">
          <svg class="closer" viewBox="0 0 14 14"><rect x="1" y="1" width="12" height="12" rx="1" fill="#e8e8e8" stroke="#7c3030" stroke-width="1.500"/><path d="M3 3l8 8M11 3l-8 8" stroke="#555" stroke-width="1.500"/></svg>
        </div>
        <div class="bottom-main">
          <div class="tb tb-steel">
            <svg class="nv"><use href="#first"/></svg><svg class="nv"><use href="#prev"/></svg><svg class="nv"><use href="#next"/></svg><svg class="nv"><use href="#last"/></svg><b class="sep"></b>
            <svg class="nv"><use href="#up"/></svg><svg class="nv"><use href="#down"/></svg><b class="sep"></b>
            <span class="it dis"><svg class="ic"><use href="#ins"/></svg>插入</span>
            <span class="it dis"><svg class="ic"><use href="#delr"/></svg>删除</span>
            <span class="it"><svg class="ic"><use href="#scale"/></svg>缩尺配筋</span>
            <span class="it"><svg class="ic"><use href="#info"/></svg>钢筋信息</span>
            <span class="it"><svg class="ic"><use href="#lib"/></svg>钢筋图库</span>
            <span class="it"><svg class="ic"><use href="#other"/></svg>其他</span><i class="car"></i>
            <span class="it">关闭</span><b class="sep"></b>
            <span class="total">单构件钢筋总重(kg)：3.461</span>
          </div>
          <table class="rebar">
            <colgroup><col class="k0"><col class="k1"><col class="k2"><col class="k3"><col class="k4"><col class="k5"><col class="k6"><col class="k7"><col class="k8"><col class="k9"><col class="k10"><col class="k11"><col class="k12"><col class="k13"><col class="k14"></colgroup>
            <thead>
              <tr><th></th><th class="cur">筋号</th><th>直径<span class="lat">(mm)</span></th><th>级别</th><th>图号</th><th>图形</th><th>计算公式</th><th>公式描述</th><th>长度<span class="lat">(mm)</span></th><th>根数</th><th>搭接</th><th>损耗<span class="lat">(%)</span></th><th>单重<span class="lat">(kg)</span></th><th>总重<span class="lat">(kg)</span></th><th>钢</th></tr>
            </thead>
            <tbody>
              <tr class="g"><th class="rh cur">1*</th><td class="nm act">墙身水平钢筋<span class="lat">.1</span></td><td class="n">6</td><td class="c"><svg class="gr"><use href="#grade"/></svg></td><td class="n">1</td><td class="fig"><span>490</span><i></i></td><td class="n">490</td><td>净长</td><td class="n">490</td><td class="n">11</td><td class="n">0</td><td class="n">0</td><td class="n">0.109</td><td class="n">1.197</td><td class="clip">直筋</td></tr>
              <tr class="g"><th class="rh">2</th><td class="nm">墙身垂直钢筋<span class="lat">.1</span></td><td class="n">6</td><td class="c"><svg class="gr"><use href="#grade"/></svg></td><td class="n">1</td><td class="fig"><span>2166</span><i></i></td><td class="n">1900+1.2*37*6</td><td>墙实际高度+搭接</td><td class="n">2166</td><td class="n">2</td><td class="n">0</td><td class="n">0</td><td class="n">0.481</td><td class="n">0.962</td><td class="clip">直筋</td></tr>
              <tr class="g"><th class="rh">3</th><td class="nm">墙身垂直钢筋<span class="lat">.2</span></td><td class="n">6</td><td class="c"><svg class="gr"><use href="#grade"/></svg></td><td class="n">1</td><td class="fig"><span>2933</span><i></i></td><td class="n">1900+500+1.2*37*d+1.2*37*6</td><td class="wrap">墙实际高度+错开长度+搭接+搭接</td><td class="n">2933</td><td class="n">2</td><td class="n">0</td><td class="n">0</td><td class="n">0.651</td><td class="n">1.302</td><td class="clip">直筋</td></tr>
              <tr class="e"><th class="rh">4</th><td class="nm"></td><td></td><td></td><td></td><td></td><td></td><td></td><td></td><td></td><td></td><td></td><td></td><td></td><td></td></tr>
            </tbody>
          </table>
        </div>
      </div>
    </section>

    <aside class="props">
      <div class="p-title"><span>属性编辑器</span><svg class="pin"><use href="#pin"/></svg><span class="p-x">×</span></div>
      <div class="pgrid">
        <div class="pr hdr"><span class="ph"></span><span class="pn cur">属性名称</span><span class="pv">属性值</span></div>
        <div class="pr"><span class="ph cur">1</span><span class="pn act">名称</span><span class="pv"><span class="lat">1</span></span></div>
        <div class="pr"><span class="ph">2</span><span class="pn">厚度<span class="lat">(mm)</span></span><span class="pv"><span class="lat">100</span></span></div>
        <div class="pr"><span class="ph">3</span><span class="pn">轴线距左墙皮距离</span><span class="pv"><span class="lat">(50)</span></span></div>
        <div class="pr"><span class="ph">4</span><span class="pn bl">水平分布钢筋</span><span class="pv"><span class="lat">(1)</span><svg class="gr"><use href="#grade"/></svg><span class="lat">6@200</span></span></div>
        <div class="pr"><span class="ph">5</span><span class="pn bl">垂直分布钢筋</span><span class="pv"><span class="lat">(1)</span><svg class="gr"><use href="#grade"/></svg><span class="lat">6@200</span></span></div>
        <div class="pr"><span class="ph">6</span><span class="pn bl">拉筋</span><span class="pv"></span></div>
        <div class="pr"><span class="ph">7</span><span class="pn">备注</span><span class="pv"></span></div>
        <div class="pr"><span class="ph">8</span><span class="pn grp"><i class="tg">−</i>其它属性</span><span class="pv"></span></div>
        <div class="pr"><span class="ph">9</span><span class="pn sub">其它钢筋</span><span class="pv"></span></div>
        <div class="pr"><span class="ph">10</span><span class="pn sub">汇总信息</span><span class="pv">剪力墙</span></div>
        <div class="pr"><span class="ph">11</span><span class="pn sub">保护层厚度<span class="lat">(mm)</span></span><span class="pv"><span class="lat">(15)</span></span></div>
        <div class="pr"><span class="ph">12</span><span class="pn sub">压墙筋</span><span class="pv"></span></div>
        <div class="pr"><span class="ph">13</span><span class="pn sub">纵筋构造</span><span class="pv">设置插筋</span></div>
        <div class="pr"><span class="ph">14</span><span class="pn sub">插筋信息</span><span class="pv"></span></div>
        <div class="pr"><span class="ph">15</span><span class="pn sub">水平钢筋拐角增</span><span class="pv">否</span></div>
        <div class="pr"><span class="ph">16</span><span class="pn sub">计算设置</span><span class="pv">按默认计算设置计算</span></div>
        <div class="pr"><span class="ph">17</span><span class="pn sub">节点设置</span><span class="pv">按默认节点设置计算</span></div>
        <div class="pr"><span class="ph">18</span><span class="pn sub">搭接设置</span><span class="pv">按默认搭接设置计算</span></div>
        <div class="pr"><span class="ph">19</span><span class="pn sub">起点顶标高<span class="lat">(m)</span></span><span class="pv">层顶标高<span class="lat">(8.6)</span></span></div>
        <div class="pr"><span class="ph">20</span><span class="pn sub">终点顶标高<span class="lat">(m)</span></span><span class="pv">层顶标高<span class="lat">(8.6)</span></span></div>
        <div class="pr"><span class="ph">21</span><span class="pn sub">起点底标高<span class="lat">(m)</span></span><span class="pv"><span class="lat">6.7</span></span></div>
        <div class="pr"><span class="ph">22</span><span class="pn sub last">终点底标高<span class="lat">(m)</span></span><span class="pv"><span class="lat">6.7</span></span></div>
        <div class="pr"><span class="ph">23</span><span class="pn grp"><i class="tg">+</i>锚固搭接</span><span class="pv"></span></div>
        <div class="pr"><span class="ph">38</span><span class="pn grp"><i class="tg">+</i>显示样式</span><span class="pv"></span></div>
      </div>
    </aside>
  </div>

  <div class="dl-pill">
    <span class="dl-l"><svg class="dl-ic" viewBox="0 0 24 24"><circle cx="12" cy="7" r="4.500" fill="none" stroke="#fff" stroke-width="3"/><circle cx="6.500" cy="16.500" r="4.500" fill="none" stroke="#fff" stroke-width="3"/><circle cx="17.500" cy="16.500" r="4.500" fill="none" stroke="#fff" stroke-width="3"/></svg></span>
    <span class="dl-r">↓ 2.6 MB/s</span>
  </div>
  <div class="feedback">
    <svg class="bell" viewBox="0 0 18 22"><path d="M2 15q2-2 2-7t5-6q5 1 5 6t2 7z" fill="#1a7de0"/><path d="M6 18h6l-3 3z" fill="#1a7de0"/></svg>
    <svg class="chat" viewBox="0 0 20 20"><path d="M1 1h18v13h-7l-2 4v-4H1z" fill="#fff" stroke="#1a7de0" stroke-width="1.500"/><path d="M6 8h1M10 8h1M14 8h1" stroke="#556" stroke-width="1.500"/></svg>
    <span>我要建议</span>
  </div>
  <div class="strip"></div>
  <div class="ball">80</div>
  <div class="ime">
    <svg class="im" viewBox="0 0 24 24"><circle cx="12" cy="12" r="12" fill="#1a78e0"/><circle cx="12" cy="10" r="5.500" fill="#fff"/><path d="M5 19q7-7 14 0l-3 2H8z" fill="#fff"/></svg>
    <span class="ying">英</span>
    <svg class="im" viewBox="0 0 24 24"><circle cx="6" cy="6" r="3" fill="#a8ccf4"/><path d="M18 12q3 5-2 10 1-5-1-8z" fill="#a8ccf4"/></svg>
    <svg class="im" viewBox="0 0 24 24"><circle cx="12" cy="12" r="10" fill="none" stroke="#1a78e0" stroke-width="2.500"/><circle cx="8.500" cy="10" r="1.500" fill="#1a78e0"/><circle cx="15.500" cy="10" r="1.500" fill="#1a78e0"/><path d="M7 15q5 4 10 0" fill="none" stroke="#1a78e0" stroke-width="2"/></svg>
    <svg class="im" viewBox="0 0 24 24"><path d="M5 2l14 16M19 2L5 18" stroke="#1a78e0" stroke-width="3"/><circle cx="6" cy="19" r="3.500" fill="none" stroke="#1a78e0" stroke-width="2.500"/><circle cx="18" cy="19" r="3.500" fill="none" stroke="#1a78e0" stroke-width="2.500"/></svg>
    <svg class="im" viewBox="0 0 24 24"><rect x="1" y="4" width="22" height="16" rx="2" fill="#1a78e0"/><path d="M4 8h16M4 12h16" stroke="#fff" stroke-width="2" stroke-dasharray="2 1"/><path d="M7 16h10" stroke="#fff" stroke-width="2"/></svg>
    <svg class="im" viewBox="0 0 24 24"><circle cx="12" cy="7" r="5" fill="#b4d2f4"/><path d="M3 22q0-9 9-9t9 9z" fill="#b4d2f4"/></svg>
    <svg class="im" viewBox="0 0 24 24"><path d="M7 3l5 2 5-2 6 5-3 4-2-1v11H6V11l-2 1-3-4z" fill="#1a78e0"/></svg>
    <svg class="im" viewBox="0 0 24 24"><path d="M9 1h6l1 3 3-1 3 5-2 3 2 3-3 5-3-1-1 3H9l-1-3-3 1-3-5 2-3-2-3 3-5 3 1z" fill="#1a78e0"/><circle cx="12" cy="12" r="4" fill="#fff"/></svg>
  </div>
</div>
</body>
</html>
```

FILE: styles.css
```css
* { box-sizing: border-box; }
html, body { margin: 0; padding: 0; }
body { width: 1920px; height: 939px; overflow: hidden; background: #f0f0f0; color: #1a1a1a; font-family: "Noto Sans CJK SC", "Liberation Sans", sans-serif; font-size: 15px; line-height: 1; }
.defs { position: absolute; }
.app { position: relative; width: 1920px; height: 939px; display: flex; flex-direction: column; filter: blur(0.4px); }
.lat { font-family: "Liberation Mono", monospace; font-size: 12.500px; }

.menubar { height: 32px; padding: 0 0 4px 9px; display: flex; align-items: center; gap: 16.900px; font-size: 14px; color: #222; flex: none; background: #f2f2f2; white-space: nowrap; }
.menubar .it { gap: 4px; margin-left: -2px; }
.menubar .car { margin: 0 5px 0 -9px; }

.it { display: inline-flex; align-items: center; gap: 5px; white-space: nowrap; flex: none; height: 100%; }
.ic { width: 20px; height: 20px; flex: none; }
.dis, .dis-row .it { color: #a8a8a8; }
.it.on { height: 30px; background: #dcebf8; border: 2px solid #3d8fdc; padding: 0 4px 0 2px; }
.car { width: 0; height: 0; flex: none; border-left: 3.500px solid transparent; border-right: 3.500px solid transparent; border-top: 4px solid #222; }
.car.dis { border-top-color: #aaa; }
.sep { width: 1px; height: 24px; background: #bdbdbd; flex: none; }
.more { font-size: 15px; font-weight: 700; line-height: 1; margin-top: -12px; flex: none; color: #222; }
.hd { width: 3px; height: 20px; flex: none; background: radial-gradient(circle, #999 1px, transparent 1.300px) 0 0 / 3px 5px; }

.tb { display: flex; align-items: center; gap: 8.500px; background: #f9f9f9; white-space: nowrap; }
.tools-top { height: 33px; display: flex; flex: none; gap: 3px; background: #f0f0f0; }
.tb-file { width: 188px; gap: 6px; padding-left: 7px; }
.tb-file .gap-s { margin-left: 7px; }
.tb-file .sep { margin: 0 3px; }
.tb-file .more { margin-left: 22px; }
.tb-main { width: 879px; padding-left: 5px; }
.tb-main .it.on { margin: 0 -1px 0 -1px; }
.tb-main .more { margin-left: 6px; }
.tb-view { flex: 1; padding-left: 5px; overflow: hidden; gap: 8px; }
.tb-view .it.on { margin-left: 2px; margin-right: -2px; }

.main { flex: 1; display: flex; min-height: 0; }
.nav { width: 207px; flex: none; padding-top: 4px; display: flex; flex-direction: column; }
.nav-title { height: 19px; background: #0557e2; color: #fff; display: flex; align-items: center; padding-left: 1px; font-size: 15px; margin-bottom: 2px; }
.pin { width: 12px; height: 12px; margin-left: auto; color: #fff; }
.nav-x { width: 20px; height: 17px; margin: 0 1px 0 7px; border: 1px solid #fff; background: #2a72e8; text-align: center; font-size: 16px; }
.nav-btn { height: 27px; margin: 0 0 1px; width: 206px; padding: 0; background: #efefef; border: 1px solid #b0b0b0; border-top-color: #ddd; font: inherit; color: #222; flex: none; }
.nav-pm { height: 34px; padding: 8px 0 0 8px; display: flex; gap: 5px; background: #f0f0f0; flex: none; }
.pm-ic { width: 24px; height: 20px; }
.tree { flex: 1; margin: 0 3px 0 3px; padding-top: 1px; background: #fff; border: 1px solid #a0a0a0; border-width: 1px 1px 2px 2px; min-height: 0; }
.tr { height: 20px; display: flex; align-items: center; position: relative; padding-left: 28px; white-space: nowrap; }
.tr .fo { width: 20px; height: 20px; flex: none; margin-right: 6px; }
.tr > .lat { margin-top: 4px; }
.tr::before { content: ""; position: absolute; left: 22px; top: 10px; width: 6px; border-top: 1px dotted #888; }
.tr.ch { padding-left: 50px; }
.tr.ch::before { left: 39px; width: 11px; }
.tr.ch::after { content: ""; position: absolute; left: 39px; top: -10px; height: 20px; border-left: 1px dotted #888; }
.tw { position: absolute; left: 12px; top: 6px; width: 7px; height: 7px; border-right: 2px solid #555; border-bottom: 2px solid #555; transform: rotate(45deg); }
.tw.cl { border-color: #aaa; transform: rotate(-45deg); left: 10px; top: 7px; }
.sel { background: #dcdcdc; padding: 2px 0; }
.fo.cad { width: 19px; height: 19px; margin-left: 6px; margin-right: 0; }
.new { font-family: "Liberation Sans", sans-serif; font-size: 10px; font-weight: 700; background: #ffe000; margin: -12px 0 0 1px; padding: 0 1px; color: #333; }
.nav-btn.last { margin: 1px 0 0 2px; width: 203px; height: 26px; }

.center { width: 1383px; flex: none; padding-top: 5px; display: flex; flex-direction: column; }
.tb-edit { height: 27px; margin-left: 7px; width: 987px; gap: 8px; flex: none; padding-left: 3px; }
.tb-edit .sep { margin: 0 -0.200px; }
.tb-row { display: flex; flex: none; margin-left: 7px; }
.r3 { height: 32px; margin-top: 6px; gap: 2px; }
.r4 { height: 32px; margin-top: 5px; gap: 2px; }
.tb-comp { width: 708px; gap: 5px; padding-left: 7px; }
.cb { display: inline-block; height: 32px; line-height: 32px; background: #fff; padding-left: 2px; flex: none; }
.c1 { width: 58px; }
.c2 { width: 74px; margin-left: 2px; }
.c3 { width: 72px; margin-left: 2px; }
.c4 { width: 72px; margin-left: 2px; }
.c5 { width: 56px; margin-left: 3px; margin-right: -5px; }
.c6 { width: 63px; height: 29px; line-height: 29px; }
.pair { display: flex; flex: none; height: 100%; align-items: center; }
.tb-comp .it.on { height: 32px; }
.tb-comp .pair { margin-right: -2px; }
.tb-comp .sep { margin: 0 0 0 3px; }
.tb-axis { width: 527px; padding-left: 4px; gap: 8px; }
.tb-axis .it { gap: 5px; }
.tb-draw { width: 1068px; padding-left: 4px; gap: 8px; }
.tb-draw .sep { margin: 0 -1px; }
.tb-stub { width: 39px; margin-left: 0; padding-left: 4px; background: #f8f8f8; }

.stage { position: relative; width: 1375px; height: 505px; margin: 2px 0 0 5px; flex: none; background: #000; }
.scene { display: block; }
.big { font-family: "Liberation Sans", sans-serif; font-size: 128px; letter-spacing: -5px; stroke-width: 1.500px; }
.g50 { fill: url(#t50); stroke: url(#t50); }
.w490 { fill: url(#t490); stroke: url(#t490); }
.halo { fill: none; stroke: #9a9a8a; stroke-width: 1; }
.bars-k, .bars-o, .bars-g, .rods-k, .rods-o, .rods-g { fill: none; stroke-width: 3.500; }
.rods-k, .rods-o, .rods-g { stroke-width: 3; }
.box-k, .box-o, .box-g { fill: none; stroke-width: 2; }
.bars-k { stroke: #00f4f4; }
.rods-k { stroke: #a89c94; }
.box-k { stroke: #fff; }
.bars-o { stroke: #6ff084; }
.rods-o { stroke: #c4b25c; }
.box-o { stroke: #f4f078; }
.bars-g { stroke: #50d8d8; }
.rods-g { stroke: #a89e96; }
.box-g { stroke: #e0e0e0; }
.thin { stroke-width: 1.500; }
.ar { fill: none; stroke: #000; stroke-width: 2; }
.az { stroke: #00e000; stroke-width: 6; }
.ax { stroke: #f00000; stroke-width: 5; }
.yl { fill: none; stroke: #2c9c10; stroke-width: 1; }
.xl { fill: none; stroke: #e02020; stroke-width: 1; }
.sc { fill: none; stroke: #90e000; stroke-width: 1; }

.rebar-panel { position: absolute; left: 12px; top: 4px; width: 209px; height: 222px; background: #fff; }
.rp-title { height: 40px; line-height: 38px; padding-left: 11px; color: #a0a0a0; font-size: 15px; }
.rp-list { margin: 0 1px 0 2px; height: 181px; border: 2px solid #a8a8a8; padding: 0 0 0 4px; }
.rp-it { display: flex; align-items: center; gap: 5px; height: 15px; font-size: 15px; white-space: nowrap; color: #222; }
.chk { width: 13px; height: 13px; border: 1px solid #bcbcbc; background: #fff; flex: none; position: relative; }
.chk.on::after { content: ""; position: absolute; left: 3px; top: 0; width: 5px; height: 9px; border: solid #444; border-width: 0 1.500px 1.500px 0; transform: rotate(40deg); }

.r5 { height: 29px; margin-top: 4px; gap: 6px; }
.r5 .it.on { height: 29px; }
.tb-snap1 { width: 259px; padding-left: 3px; gap: 8px; }
.tb-snap1 .pair { margin-left: -5px; }
.tb-snap2 { width: 326px; padding-left: 1px; gap: 5px; }
.tb-snap2 .it { margin-left: 3px; }
.tb-snap2 .pair .it { margin-left: 0; }
.tb-snap2 .pair + .it { margin-left: -7px; }
.tb-snap3 { width: 510px; padding-left: 3px; gap: 3px; }
.tb-snap3 .car { margin: 0 5px 0 -9px; }
.tb-snap3 .sep { margin-right: 2px; }
.tb-snap3 .lab:first-of-type { margin-right: 2px; }
.lab { color: #888; font-size: 15px; font-family: "Liberation Sans", sans-serif; flex: none; }
.ly { margin-left: 4px; }
.spin { width: 72px; height: 28px; line-height: 26px; padding-right: 24px; text-align: right; border: 1px solid #8c8c8c; background: #f9f9f9; color: #999; flex: none; font-family: "Liberation Sans", sans-serif; font-size: 16px; position: relative; margin: 0 1px; }
.spin::after { content: "▴\A▾"; white-space: pre; position: absolute; right: 5px; top: 3px; font-size: 10px; line-height: 10px; color: #666; }
.spin.wide { width: 85px; }
.rt { margin: 0 4px 0 8px; }

.bottom { flex: 1; display: flex; margin: 11px 0 0 5px; min-height: 0; background: #fff; }
.grip-col { width: 17px; flex: none; background: #f0f0f0 radial-gradient(circle, #bbb 0.800px, transparent 1.100px) 0 0 / 4px 5px; position: relative; }
.closer { width: 14px; height: 14px; display: block; position: absolute; left: 0; top: -1px; }
.bottom-main { width: 1355px; flex: none; display: flex; flex-direction: column; }
.tb-steel { height: 30px; flex: none; gap: 7.500px; padding-left: 4px; background: #f9f9f9; }
.tb-steel .car { margin: 0 2px 0 -2px; }
.tb-steel .car + .it { margin-left: 5px; }
.nv { width: 17px; height: 17px; flex: none; margin-right: 5px; }
.total { font-size: 14.500px; margin-left: 2px; }

.rebar { margin: 3px 0 0 -1px; table-layout: fixed; border-collapse: collapse; width: 1355px; background: #fff; font-size: 15px; }
.rebar col.k0 { width: 42px; } .rebar col.k1 { width: 91px; } .rebar col.k2 { width: 70px; } .rebar col.k3 { width: 45px; } .rebar col.k4 { width: 41px; } .rebar col.k5 { width: 251px; } .rebar col.k6 { width: 208px; } .rebar col.k7 { width: 194px; } .rebar col.k8 { width: 77px; } .rebar col.k9 { width: 48px; } .rebar col.k10 { width: 49px; } .rebar col.k11 { width: 60px; } .rebar col.k12 { width: 77px; } .rebar col.k13 { width: 76px; } .rebar col.k14 { width: 26px; }
.rebar th, .rebar td { border: 2px solid #cfcfcf; padding: 0 2px; font-weight: 400; overflow: hidden; white-space: nowrap; }
.rebar thead th { height: 24px; background: linear-gradient(#fff, #e8e8e8); text-align: center; font-size: 15px; padding: 0; }
.rebar th.cur, .pn.cur, .ph.cur { background: linear-gradient(#f9dfa6, #f0bf68); color: #6a1470; }
.rebar tbody th.rh { background: linear-gradient(#fafafa, #e8e8e8); font-family: "Liberation Mono", monospace; font-size: 13px; text-align: center; }
.rebar tbody th.rh.cur { background: linear-gradient(#f9dfa6, #f0bf68); color: #6a1470; }
.rebar tr.g td { background: #c8fed4; height: 36px; }
.rebar tr.e td, .rebar tr.e th { height: 24px; }
.rebar td.nm { white-space: normal; line-height: 15.500px; border-right: 2px solid #333; padding: 0 2px; word-break: break-all; }
.rebar tr.g td.act { background: #aee8da; outline: 2px dotted #333; outline-offset: -3px; }
.rebar td.n { font-family: "Liberation Mono", monospace; font-size: 12.500px; }
.rebar td.c { text-align: center; }
.rebar td.wrap { white-space: normal; line-height: 15px; }
.gr { width: 12px; height: 14px; vertical-align: -2px; margin: 0 1px; flex: none; }
.rebar td.fig { text-align: center; position: relative; padding: 0 0 8px; }
.fig span { color: #f01010; font-family: "Liberation Mono", monospace; font-size: 13px; }
.fig i { position: absolute; left: 30px; right: 33px; bottom: 9px; height: 3px; background: #000; }

.props { width: 330px; flex: none; padding: 5px 2px 0 1px; background: #fff; border-right: 2px solid #c4c4c4; }
.p-title { height: 18px; background: #f2f2f2; border-top: 2px solid #7c7c7c; border-bottom: 1px solid #7c7c7c; display: flex; align-items: center; font-size: 15px; }
.p-title .pin { color: #222; margin-right: 10px; }
.p-x { color: #555; width: 15px; font-size: 16px; }
.pgrid { margin: 4px 0 0 2px; width: 322px; }
.pr { display: grid; grid-template-columns: 25px 151px 146px; height: 23.850px; }
.pr.hdr { height: 29px; }
.pr > span { border: solid #d0d0d0; border-width: 0 2px 2px 0; display: flex; align-items: center; white-space: nowrap; overflow: hidden; }
.pn > .lat, .pv > .lat { margin-top: 4px; }
.ph { background: linear-gradient(#f8f8f8, #e8e8e8); justify-content: center; font-family: "Liberation Mono", monospace; font-size: 12.500px; }
.pn { padding-left: 25px; position: relative; }
.pn.act { background: #0078d7; color: #fff; }
.pn.bl { color: #0000f0; }
.pn.grp { color: #a0a0a0; padding-left: 3px; gap: 5px; }
.tg { width: 15px; height: 15px; flex: none; border: 1px solid #bbb; color: #111; font-style: normal; font-size: 14px; line-height: 13px; text-align: center; font-family: "Liberation Sans", sans-serif; }
.pn.sub { padding-left: 37px; }
.pn.sub::before { content: ""; position: absolute; left: 10px; top: -1px; height: 25px; border-left: 1px solid #bbb; }
.pn.sub::after { content: ""; position: absolute; left: 10px; top: 11px; width: 20px; border-top: 1px solid #bbb; }
.pn.sub.last::before { height: 13px; }
.pv { color: #999; padding-left: 3px; }
.pr.hdr .pv, .pr.hdr .pn { justify-content: center; padding: 0; font-size: 15px; }
.pr.hdr .pv { color: #222; background: linear-gradient(#fff, #e8e8e8); }
.pr.hdr .ph { background: #f4f4f4; }
.pv .gr { margin: 0 0 0 2px; }
.pv .lat { letter-spacing: 0.300px; }

.dl-pill { position: absolute; left: 1655px; top: 3px; width: 132px; height: 32px; border: 2px solid #7aa4f6; border-radius: 6px; display: flex; overflow: hidden; background: #d3defb; }
.dl-l { width: 37px; background: #5c8ef8; display: flex; align-items: center; justify-content: center; }
.dl-ic { width: 24px; height: 24px; }
.dl-r { flex: 1; color: #6d98f0; font-family: "Liberation Sans", sans-serif; font-size: 17px; display: flex; align-items: center; justify-content: center; white-space: nowrap; }
.feedback { position: absolute; left: 1800px; top: 0; height: 28px; display: flex; align-items: center; gap: 8px; white-space: nowrap; font-size: 15px; }
.bell { width: 18px; height: 22px; }
.chat { width: 20px; height: 20px; margin-left: 2px; }
.feedback span { margin-left: -2px; }
.strip { position: absolute; left: 1908px; top: 22px; width: 12px; height: 75px; background: #3d4a55; border-radius: 3px 0 0 3px; background-image: linear-gradient(#b08030 0 35%, #3aa0c0 35% 100%); background-size: 2px 100%; background-position: center; background-repeat: no-repeat; }
.ball { position: absolute; left: 1897px; top: 432px; width: 56px; height: 56px; border-radius: 50%; background: radial-gradient(circle at 50% 30%, #4cd850, #15a020); border: 2px solid #fff; box-shadow: 0 1px 5px rgba(0,0,0,.5); color: #fff; font-family: "Liberation Sans", sans-serif; font-weight: 700; font-size: 14px; padding: 18px 0 0 6px; }
.ime { position: absolute; left: 1645px; top: 792px; width: 270px; height: 34px; background: #fff; border: 1px solid #a8c8f0; display: flex; align-items: center; padding-left: 7px; }
.im { width: 25px; height: 25px; margin-right: 8px; flex: none; }
.ying { font-size: 22px; font-weight: 700; color: #1a78e0; margin: 0 5px 0 -2px; flex: none; }
.im:nth-of-type(n+2) { width: 20px; height: 20px; margin-right: 9px; }
```
